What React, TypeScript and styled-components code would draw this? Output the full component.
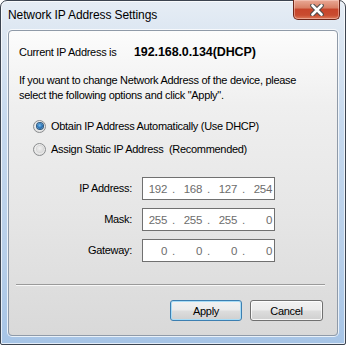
import { Fragment } from "react";
import styled, { createGlobalStyle } from "styled-components";

const GlobalStyle = createGlobalStyle`
  html, body {
    margin: 0;
    padding: 0;
    background: #ffffff;
  }
  * {
    box-sizing: border-box;
  }
`;

const Window = styled.div`
  width: 346px;
  height: 345px;
  display: flex;
  flex-direction: column;
  border: 1px solid #3c4450;
  border-radius: 7px 7px 2px 2px;
  padding-bottom: 8px;
  font-family: "Liberation Sans", Arial, sans-serif;
  color: #000;
  background: linear-gradient(
    180deg,
    #e6edf5 0px,
    #dde7f2 30px,
    #c6d9ee 120px,
    #b6cee9 260px,
    #a6c4e6 345px
  );
  box-shadow: inset 0 0 0 1px rgba(255, 255, 255, 0.7);
`;

const TitleBar = styled.div`
  height: 29px;
  display: flex;
  justify-content: space-between;
  align-items: flex-start;
  padding-left: 7px;
  padding-right: 5px;
`;

const Title = styled.div`
  font-size: 12px;
  line-height: 28px;
  color: #000;
  letter-spacing: -0.1px;
`;

const CloseButton = styled.div`
  margin-top: -1px;
  width: 47px;
  height: 20px;
  display: flex;
  align-items: center;
  justify-content: center;
  border: 1px solid #6e2619;
  border-top: none;
  border-radius: 0 0 5px 5px;
  background: linear-gradient(
    180deg,
    #e9a996 0%,
    #d98167 40%,
    #c7452b 50%,
    #c94c30 80%,
    #dd7c5c 100%
  );
  box-shadow: inset 0 0 0 1px rgba(255, 220, 210, 0.45);
`;

const Client = styled.div`
  margin: 0 7px;
  height: 306px;
  display: flex;
  flex-direction: column;
  padding-left: 10px;
  border: 1px solid #8f9aa8;
  border-radius: 4px;
  background: linear-gradient(180deg, #fcfcfc 0%, #efefef 25%, #e6e6e6 60%, #d9d9d9 100%);
  box-shadow: 0 0 0 1px rgba(255, 255, 255, 0.75);
  font-size: 11px;
  letter-spacing: -0.3px;
`;

const CurrentRow = styled.div`
  margin-top: 14px;
  height: 14px;
  line-height: 14px;
  display: flex;
`;

const CurrentLabel = styled.span`
  width: 115px;
`;

const CurrentValue = styled.span`
  font-size: 12.5px;
  font-weight: bold;
  letter-spacing: -0.1px;
`;

const Note = styled.p`
  margin: 14px 0 0;
  line-height: 15px;
`;

const RadioGroup = styled.div`
  margin-top: 15px;
  padding-left: 14px;
  display: flex;
  flex-direction: column;
  gap: 7px;
`;

const RadioRow = styled.label`
  height: 16px;
  display: flex;
  align-items: center;
  gap: 5px;
`;

const RadioCircle = styled.span<{ $checked?: boolean }>`
  width: 13px;
  height: 13px;
  border-radius: 50%;
  border: 1px solid #8a8c8e;
  display: flex;
  align-items: center;
  justify-content: center;
  background: radial-gradient(circle at 50% 40%, #ffffff 0%, #e8e8e8 60%, #d2d2d2 100%);

  &::after {
    content: "";
    width: 6px;
    height: 6px;
    border-radius: 50%;
    background: ${({ $checked }) =>
      $checked
        ? "radial-gradient(circle at 45% 40%, #7fc0ee 0%, #2a74b8 50%, #1a4f86 100%)"
        : "radial-gradient(circle at 45% 40%, #f2f2f2 0%, #dcdcdc 70%, #cacaca 100%)"};
    box-shadow: ${({ $checked }) =>
      $checked ? "0 0 0 1px #2b587f" : "0 0 0 1px #d6d6d6"};
  }
`;

const AddressGrid = styled.div`
  margin-top: 20px;
  display: grid;
  grid-template-columns: 113px 133px;
  column-gap: 10px;
  row-gap: 8px;
  align-items: center;
`;

const FieldLabel = styled.span`
  text-align: right;
  line-height: 23px;
`;

const IpBox = styled.div`
  height: 23px;
  display: grid;
  grid-template-columns: 23px 10px 25px 10px 25px 10px 25px;
  align-items: center;
  padding-left: 1px;
  border: 1px solid #707070;
  background: #ffffff;
  color: #6d6d6d;
  font-size: 11.5px;
`;

const Octet = styled.span`
  text-align: right;
`;

const Dot = styled.span`
  text-align: center;
  padding-left: 3px;
`;

const Separator = styled.div`
  margin: 22px 12px 0 -3px;
  border-top: 1px solid #9a9a9a;
  border-bottom: 1px solid #f8f8f8;
`;

const ButtonRow = styled.div`
  margin-top: 14px;
  margin-right: 14px;
  display: flex;
  justify-content: flex-end;
  gap: 8px;
`;

const Button = styled.button<{ $primary?: boolean }>`
  width: ${({ $primary }) => ($primary ? "72px" : "73px")};
  height: 21px;
  padding: 0;
  font-family: "Liberation Sans", Arial, sans-serif;
  font-size: 11px;
  letter-spacing: -0.3px;
  color: #000;
  border-radius: 3px;
  border: 1px solid ${({ $primary }) => ($primary ? "#3c7fb1" : "#707070")};
  background: linear-gradient(180deg, #f2f2f2 0%, #ebebeb 48%, #dddddd 52%, #cfcfcf 100%);
  box-shadow: inset 0 0 0 1px
    ${({ $primary }) => ($primary ? "#a8dcf6" : "rgba(255,255,255,0.8)")};
`;

const addresses = [
  { label: "IP Address:", octets: ["192", "168", "127", "254"] },
  { label: "Mask:", octets: ["255", "255", "255", "0"] },
  { label: "Gateway:", octets: ["0", "0", "0", "0"] },
];

const App = () => {
  return (
    <>
      <GlobalStyle />
      <Window>
        <TitleBar>
          <Title>Network IP Address Settings</Title>
          <CloseButton>
            <svg width="14" height="12" viewBox="0 0 14 12">
              <path
                d="M2.5 1.5 L11.5 10.5 M11.5 1.5 L2.5 10.5"
                stroke="#4a4a4a"
                strokeWidth="4.6"
                strokeLinecap="round"
              />
              <path
                d="M2.5 1.5 L11.5 10.5 M11.5 1.5 L2.5 10.5"
                stroke="#ffffff"
                strokeWidth="2.6"
                strokeLinecap="round"
              />
            </svg>
          </CloseButton>
        </TitleBar>

        <Client>
          <CurrentRow>
            <CurrentLabel>Current IP Address is</CurrentLabel>
            <CurrentValue>192.168.0.134(DHCP)</CurrentValue>
          </CurrentRow>

          <Note>
            If you want to change Network Address of the device, please
            <br />
            select the following options and click "Apply".
          </Note>

          <RadioGroup>
            <RadioRow>
              <RadioCircle $checked />
              Obtain IP Address Automatically (Use DHCP)
            </RadioRow>
            <RadioRow>
              <RadioCircle />
              Assign Static IP Address&nbsp; (Recommended)
            </RadioRow>
          </RadioGroup>

          <AddressGrid>
            {addresses.map((row) => (
              <Fragment key={row.label}>
                <FieldLabel>{row.label}</FieldLabel>
                <IpBox>
                  {row.octets.map((o, i) => (
                    <Fragment key={i}>
                      <Octet>{o}</Octet>
                      {i < 3 && <Dot>.</Dot>}
                    </Fragment>
                  ))}
                </IpBox>
              </Fragment>
            ))}
          </AddressGrid>

          <Separator />

          <ButtonRow>
            <Button $primary>Apply</Button>
            <Button>Cancel</Button>
          </ButtonRow>
        </Client>
      </Window>
    </>
  );
};

export default App;
